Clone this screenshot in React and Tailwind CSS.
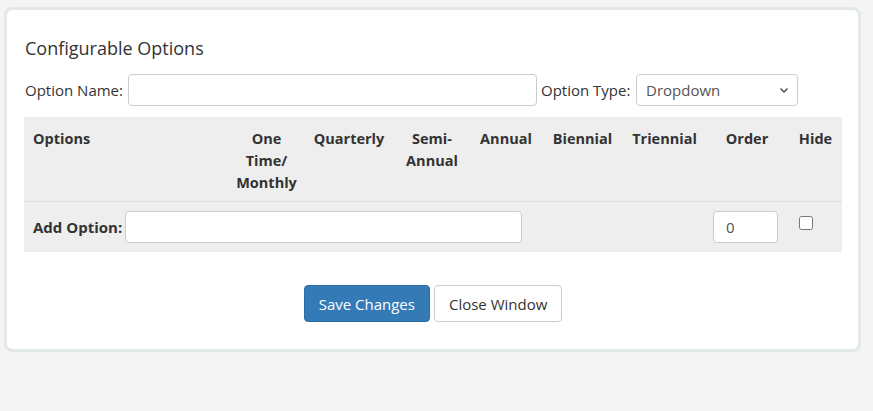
import { useState } from 'react';

const cols = 'grid grid-cols-[204px_77px_88px_78px_70px_83px_81px_84px_53px]';

export default function App() {
  const [name, setName] = useState('');
  const [type, setType] = useState('Dropdown');
  const [option, setOption] = useState('');
  const [order, setOrder] = useState('0');
  const [hide, setHide] = useState(false);

  return (
    <div className="min-h-screen bg-[#f4f4f4] pt-[7px] pl-[4px] font-['Open_Sans',sans-serif] text-[15px] text-[#333]">
      <div className="w-[857px] h-[345px] bg-white border-[3px] border-[#e2e7ea] rounded-[8px] pl-[17px] pr-[16px] pt-[27px]">
        <h2 className="text-[18px] leading-[22px] font-normal text-[#333] ml-[1px]">Configurable Options</h2>

        {/* Name / type */}
        <div className="flex items-center mt-[15px] h-[32px]">
          <label className="ml-[1px] mr-[4px] w-[99px] whitespace-nowrap">Option Name:</label>
          <input value={name} onChange={e => setName(e.target.value)}
            className="w-[409px] h-[32px] border border-[#ccc] rounded-[4px] px-3 bg-white outline-none" />
          <label className="ml-[4px] mr-[4px] w-[91px] whitespace-nowrap">Option Type:</label>
          <div className="relative w-[162px] h-[32px]">
            <select value={type} onChange={e => setType(e.target.value)}
              className="appearance-none w-full h-full border border-[#ccc] rounded-[4px] pl-[9px] bg-white text-[#555] outline-none">
              <option>Dropdown</option>
              <option>Radio</option>
              <option>Yes/No</option>
              <option>Quantity</option>
            </select>
            <svg className="absolute right-[9px] top-[13px] pointer-events-none" width="10" height="7" viewBox="0 0 10 7" fill="none">
              <path d="M1.5 1.5 L5 5 L8.5 1.5" stroke="#444" strokeWidth="1.3" />
            </svg>
          </div>
        </div>

        {/* Table */}
        <div className="mt-[11px] bg-[#eeeeee]">
          <div className={`${cols} font-bold text-[14.5px] leading-[22px] pt-[11px] pb-[7px] border-b border-[#dddddd] text-[#333]`}>
            <div className="pl-[9px]">Options</div>
            <div className="text-center">One<br />Time/<br />Monthly</div>
            <div className="text-center">Quarterly</div>
            <div className="text-center">Semi-<br />Annual</div>
            <div className="text-center">Annual</div>
            <div className="text-center">Biennial</div>
            <div className="text-center">Triennial</div>
            <div className="text-center">Order</div>
            <div className="text-center">Hide</div>
          </div>
          <div className={`${cols} h-[50px] items-start pt-[9px]`}>
            <div className="col-span-6 flex items-center pl-[9px]">
              <label className="font-bold mr-[3px] whitespace-nowrap">Add Option:</label>
              <input value={option} onChange={e => setOption(e.target.value)}
                className="w-[397px] h-[32px] border border-[#ccc] rounded-[4px] px-3 bg-white outline-none" />
            </div>
            <div />
            <div className="pl-[8px]">
              <input value={order} onChange={e => setOrder(e.target.value)}
                className="w-[65px] h-[32px] border border-[#ccc] rounded-[4px] pl-[12px] bg-white text-[#555] outline-none" />
            </div>
            <div className="pl-[10px] pt-[5px]">
              <input type="checkbox" checked={hide} onChange={e => setHide(e.target.checked)}
                className="w-[14px] h-[14px] m-0 block" />
            </div>
          </div>
        </div>

        {/* Buttons */}
        <div className="flex justify-center gap-[4px] mt-[33px]">
          <button className="h-[37px] px-[14px] pt-[1px] bg-[#337ab7] border border-[#2e6da4] rounded-[4px] text-white">Save Changes</button>
          <button className="h-[37px] px-[14px] pt-[1px] bg-white border border-[#ccc] rounded-[4px] text-[#333]">Close Window</button>
        </div>
      </div>
    </div>
  );
}
